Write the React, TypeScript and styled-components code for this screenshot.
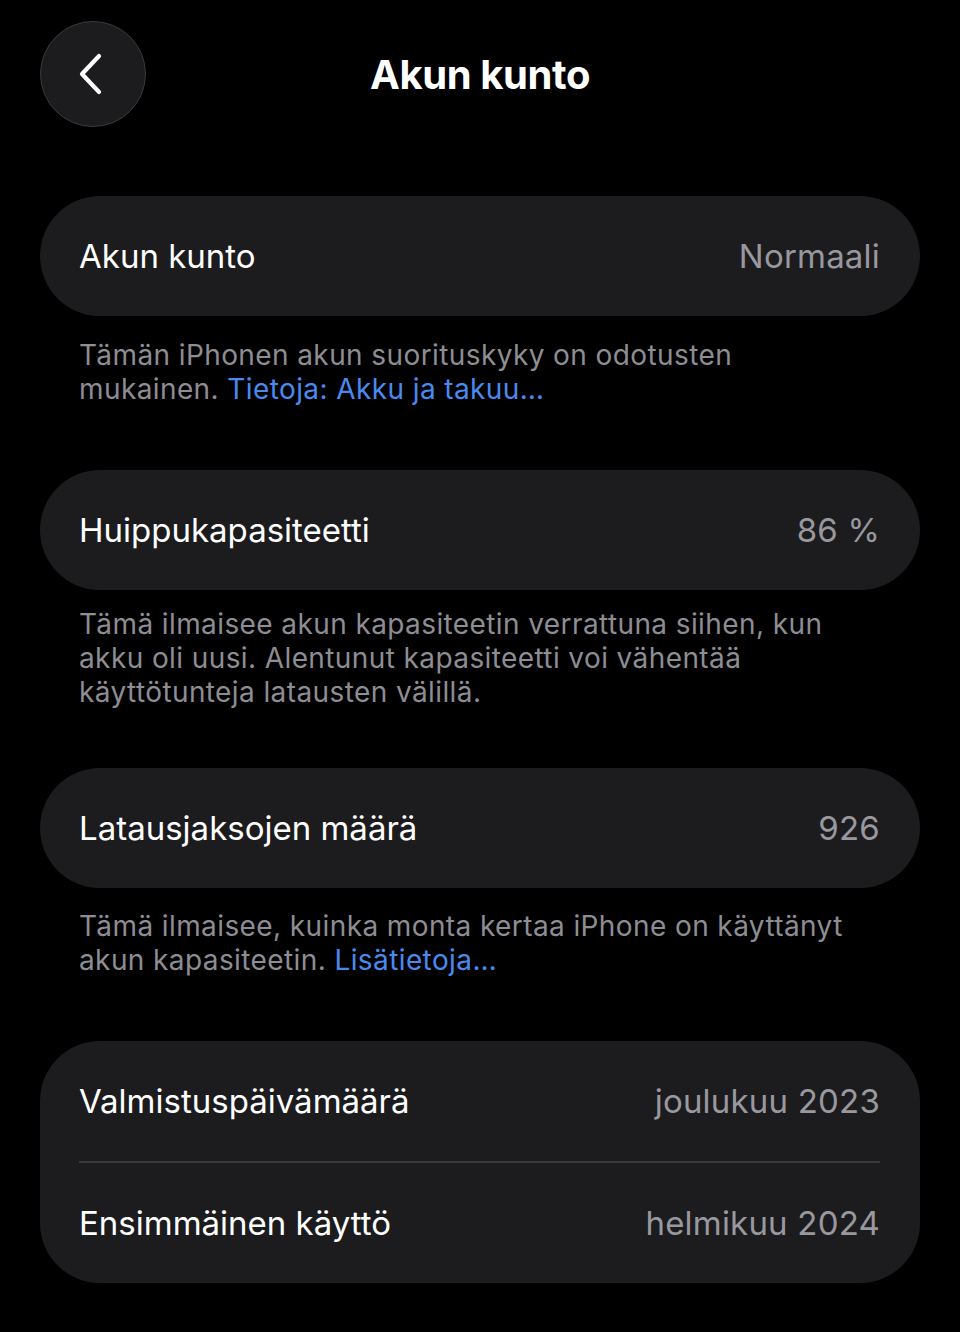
import styled, { createGlobalStyle } from "styled-components";

const GlobalStyle = createGlobalStyle`
  html, body {
    margin: 0;
    padding: 0;
    background: #000;
  }
  body {
    font-family: Inter, "Noto Sans", sans-serif;
    -webkit-font-smoothing: antialiased;
  }
`;

const Page = styled.div`
  width: 960px;
  min-height: 1332px;
  background: #000;
  color: #fff;
  box-sizing: border-box;
  padding: 21px 40px 0;
`;

const Header = styled.header`
  display: grid;
  grid-template-columns: 106px 1fr 106px;
  align-items: center;
  height: 106px;
  margin-bottom: 69px;
`;

const BackButton = styled.button`
  width: 106px;
  height: 106px;
  border-radius: 50%;
  background: #1c1c1e;
  border: 1.5px solid #3a3a3c;
  display: flex;
  align-items: center;
  justify-content: center;
  padding: 0 5px 0 0;
  cursor: pointer;
`;

const Title = styled.h1`
  margin: 0;
  text-align: center;
  font-size: 40px;
  font-weight: 700;
  letter-spacing: -0.4px;
`;

const Card = styled.section`
  background: #1c1c1e;
  border-radius: 60px;
  padding: 0 40px 0 39px;
`;

const Row = styled.div<{ $divider?: boolean }>`
  display: flex;
  align-items: center;
  justify-content: space-between;
  height: 120px;
  font-size: 33px;
  border-top: ${(p) => (p.$divider ? "2px solid #38383a" : "none")};
`;

const Label = styled.span`
  color: #fff;
`;

const Value = styled.span`
  color: #98989e;
  letter-spacing: 0.2px;
`;

const Footer = styled.p<{ $top: number }>`
  margin: 0;
  padding: ${(p) => p.$top}px 40px 0 39px;
  font-size: 28px;
  line-height: 34px;
  color: #8d8d93;
  letter-spacing: 0.4px;
`;

const Link = styled.a`
  color: #4a8aef;
  text-decoration: none;
`;

const Group = styled.div<{ $gap: number }>`
  margin-bottom: ${(p) => p.$gap}px;
`;

const ChevronLeft = () => (
  <svg width="24" height="42" viewBox="0 0 24 42" fill="none">
    <path
      d="M20 3 L3 21 L20 39"
      stroke="#fff"
      strokeWidth="4.2"
      strokeLinecap="round"
      strokeLinejoin="round"
    />
  </svg>
);

const App = () => {
  return (
    <>
      <GlobalStyle />
      <Page>
        <Header>
          <BackButton aria-label="Takaisin">
            <ChevronLeft />
          </BackButton>
          <Title>Akun kunto</Title>
          <span />
        </Header>

        <Group $gap={64}>
          <Card>
            <Row>
              <Label>Akun kunto</Label>
              <Value>Normaali</Value>
            </Row>
          </Card>
          <Footer $top={22}>
            Tämän iPhonen akun suorituskyky on odotusten
            <br />
            mukainen. <Link href="#">Tietoja: Akku ja takuu…</Link>
          </Footer>
        </Group>

        <Group $gap={59}>
          <Card>
            <Row>
              <Label>Huippukapasiteetti</Label>
              <Value>86 %</Value>
            </Row>
          </Card>
          <Footer $top={17}>
            Tämä ilmaisee akun kapasiteetin verrattuna siihen, kun
            <br />
            akku oli uusi. Alentunut kapasiteetti voi vähentää
            <br />
            käyttötunteja latausten välillä.
          </Footer>
        </Group>

        <Group $gap={64}>
          <Card>
            <Row>
              <Label>Latausjaksojen määrä</Label>
              <Value>926</Value>
            </Row>
          </Card>
          <Footer $top={21}>
            Tämä ilmaisee, kuinka monta kertaa iPhone on käyttänyt
            <br />
            akun kapasiteetin. <Link href="#">Lisätietoja…</Link>
          </Footer>
        </Group>

        <Card>
          <Row>
            <Label>Valmistuspäivämäärä</Label>
            <Value>joulukuu 2023</Value>
          </Row>
          <Row $divider>
            <Label>Ensimmäinen käyttö</Label>
            <Value>helmikuu 2024</Value>
          </Row>
        </Card>
      </Page>
    </>
  );
};

export default App;
